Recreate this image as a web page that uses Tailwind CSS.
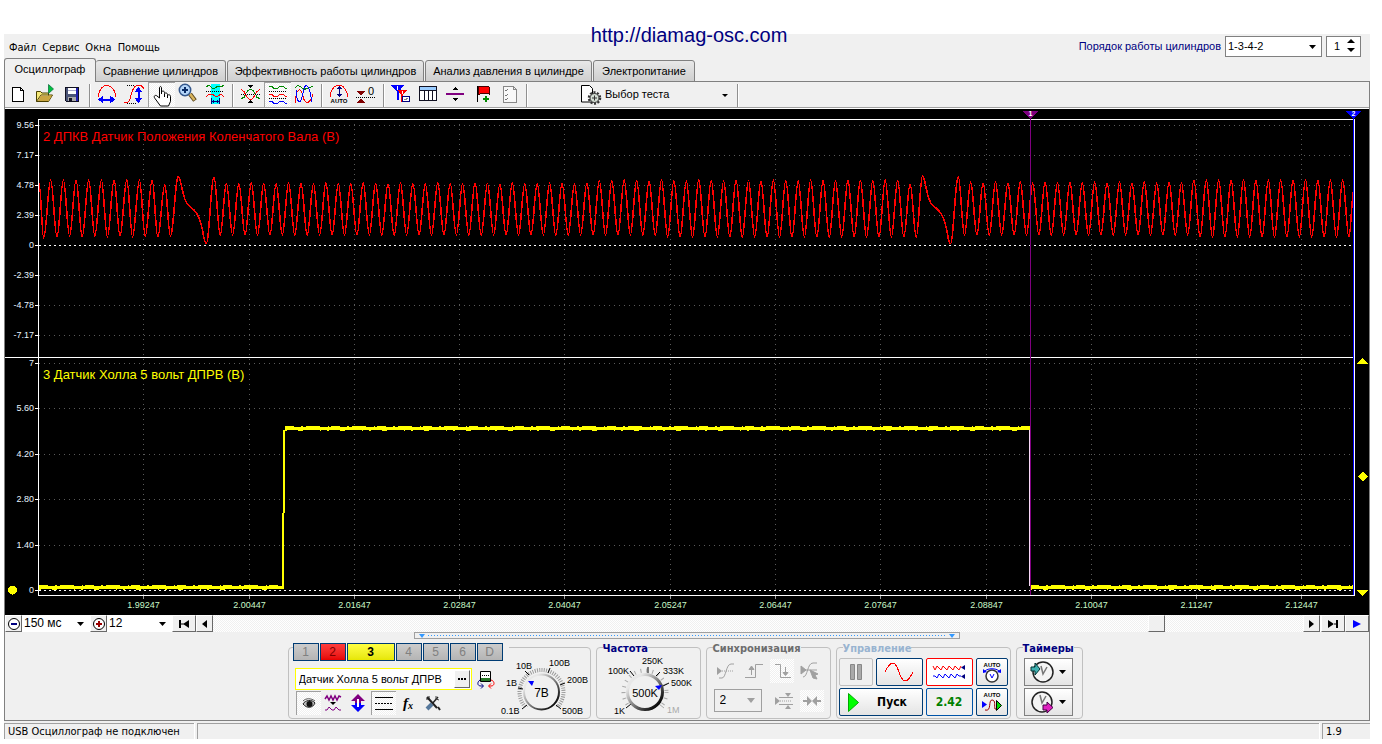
<!DOCTYPE html>
<html lang="ru">
<head>
<meta charset="utf-8">
<title>Осциллограф</title>
<script src="https://cdn.jsdelivr.net/npm/@tailwindcss/browser@4"></script>
</head>
<body class="bg-white font-['Liberation_Sans',sans-serif] text-[11px] leading-[13px] text-black">
<a href="http://diamag-osc.com" class="absolute top-[23px] left-1/2 z-10 -translate-x-1/2 pr-[4px] text-[20px] leading-[24px] text-[#000080]">http://diamag-osc.com</a>
<div class="mt-[34px] mr-[12px] ml-[4px] bg-[#f0f0f0]">

<!-- menu and firing order -->
<header class="flex h-[24px] items-center justify-between">
  <nav class="flex gap-[6px] pl-[5px] pt-[2px] font-['DejaVu_Sans_Condensed','DejaVu_Sans',sans-serif] font-stretch-condensed">
    <button>Файл</button><button>Сервис</button><button>Окна</button><button>Помощь</button>
  </nav>
  <div class="flex items-center gap-[4px] pr-[9px]">
    <label for="order" class="text-[#000080]">Порядок работы цилиндров</label>
    <div class="relative">
      <select id="order" class="block h-[21px] w-[97px] appearance-none border border-[#808080] bg-white pl-[2px] text-[11px]"><option>1-3-4-2</option></select>
      <svg class="pointer-events-none absolute top-[9px] right-[6px]" width="7" height="4"><path d="M0 0h7L3.500 4z"/></svg>
    </div>
    <div class="relative">
      <input aria-label="Цилиндр" value="1" class="block h-[21px] w-[35px] border border-[#808080] bg-white pl-[7px] text-[11px]">
      <svg class="pointer-events-none absolute top-[3px] right-[6px]" width="8" height="14"><path d="M0 4h8L4 0zM0 9h8L4 13z"/></svg>
    </div>
  </div>
</header>

<!-- tabs -->
<div role="tablist" class="relative z-10 -mb-px flex h-[24px] items-end">
  <button role="tab" aria-selected="true" class="h-[24px] w-[92px] rounded-t-[3px] border border-b-0 border-[#808080] bg-[#f0f0f0] pb-[2px]">Осциллограф</button>
  <button role="tab" class="mr-px h-[22px] w-[130px] rounded-t-[3px] border border-l-0 border-[#808080] bg-linear-to-b from-[#e8e8e8] to-[#cfcfcf]">Сравнение цилиндров</button>
  <button role="tab" class="mr-px h-[22px] w-[197px] rounded-t-[3px] border border-[#808080] bg-linear-to-b from-[#e8e8e8] to-[#cfcfcf]">Эффективность работы цилиндров</button>
  <button role="tab" class="mr-px h-[22px] w-[167px] rounded-t-[3px] border border-[#808080] bg-linear-to-b from-[#e8e8e8] to-[#cfcfcf]">Анализ давления в цилиндре</button>
  <button role="tab" class="h-[22px] w-[102px] rounded-t-[3px] border border-[#808080] bg-linear-to-b from-[#e8e8e8] to-[#cfcfcf]">Электропитание</button>
</div>

<main class="border border-[#808080]">
<!-- toolbar -->
<div role="toolbar" class="flex h-[27px] items-start border-b border-white shadow-[inset_0_-1px_#a0a0a0] [&_button]:flex [&_button]:h-[25px] [&_button]:w-[27px] [&_button]:items-start [&_button]:justify-center">
  <button aria-label="Новый"><svg width="27" height="24" viewBox="5 82 27 24" shape-rendering="crispEdges"><path d="M12.500 87.500h8l3 3v11h-11zM20.500 87.500v3h3" fill="#fff" stroke="#000"/></svg></button>
  <button aria-label="Открыть"><svg width="27" height="24" viewBox="32 82 27 24"><path d="M36.500 101.500v-10h4l1.500 1.500h6.500v3M36.500 101.500h12l4-6.500h-11.500z" fill="#f5e878" stroke="#4a4000"/><path d="M41 95.500h11l-3.500 5.500h-11z" fill="#c9a642"/><path d="M48.500 84.500v9l5-4.500z" fill="#00c040" stroke="#063" stroke-width=".7"/></svg></button>
  <button aria-label="Сохранить"><svg width="27" height="24" viewBox="59 82 27 24" shape-rendering="crispEdges"><path d="M65.500 87.500h13v14h-12l-1-1z" fill="#4a5478" stroke="#101020"/><path d="M68 88h8v6h-8z" fill="#fff"/><path d="M68 90h8v1h-8z" fill="#aac"/><path d="M68 97h8v4h-8z" fill="#aaa"/><path d="M69 98h3v3h-3z" fill="#112"/><path d="M76 88h2v13h-2z" fill="#2020b0"/></svg></button>
  <span class="mx-[3px] mt-[2px] h-[23px] w-[2px] border-l border-[#909090] bg-white"></span>
  <button aria-label="Период"><svg width="27" height="24" viewBox="94 82 27 24" shape-rendering="crispEdges"><path d="M98.500 97v-3c2-6 5-8.500 8-8.500s7 2.500 9 8.500v3" fill="none" stroke="red"/><path d="M98 99.500l5-4v3h7v-3l5 4-5 4v-3h-7v3z" fill="#00f"/></svg></button>
  <button aria-label="Амплитуда"><svg width="27" height="24" viewBox="121 82 27 24" shape-rendering="crispEdges"><path d="M124 102.500h3c5 0 3-16 10-17h4l3 3" fill="none" stroke="red"/><path d="M127 85.500h8M127 103.500h9" stroke="#000" stroke-dasharray="1 1"/><path d="M138.500 87l4 5h-3v6h3l-4 5-4-5h3v-6h-3z" fill="#00f"/></svg></button>
  <button aria-label="Рука" aria-pressed="true" class="border-t border-l border-[#a0a0a0] bg-[conic-gradient(#fff_25%,#f0f0f0_0_50%,#fff_0_75%,#f0f0f0_0)] bg-[length:2px_2px]"><svg width="26" height="24" viewBox="150 83 26 24"><path d="M160.500 98v-10c0-2 2-2 2 0v6-2c1-1.500 3-1 3 .5v1c1-1 3-.5 3 1v.8c1-1 3-.5 3 1v5l-2 4.700h-8l-5.500-7.500c-2-2.500.5-4 2-2.500z" fill="#fff" stroke="#000"/><path d="M165.500 94v3M168.500 95v3" stroke="#000"/></svg></button>
  <button aria-label="Масштаб"><svg width="27" height="24" viewBox="175 82 27 24"><path d="M190 94l5 6.500" stroke="#5b471f" stroke-width="4.500"/><path d="M190 94l4.500 6" stroke="#d9b45c" stroke-width="2.500"/><circle cx="185" cy="90" r="5.700" fill="#b4d5f8" stroke="#34578c" stroke-width="1.500"/><path d="M182 90h6M185 87v6" stroke="#0a2c66" stroke-width="2"/></svg></button>
  <button aria-label="Фрагмент"><svg width="27" height="24" viewBox="202 82 27 24" shape-rendering="crispEdges"><path d="M211 84h9v20h-9z" fill="#0ff"/><path d="M206 87l3-2 3 3h3l3-2 3 1 3-2" fill="none" stroke="#080"/><path d="M206 91.500h18" stroke="#000" stroke-dasharray="1 1"/><path d="M206 97l3-3h3l3 2h3l3-2 3 3" fill="none" stroke="red"/><path d="M211.500 98v6M219.500 98v6M212 101.500h7M213 100v3M217 100v3" stroke="#000080"/></svg></button>
  <span class="mx-[3px] mt-[2px] h-[23px] w-[2px] border-l border-[#909090] bg-white"></span>
  <button aria-label="Совместить"><svg width="27" height="24" viewBox="237 82 27 24" shape-rendering="crispEdges"><path d="M241 98.500l3-1c3-8 5-8 6.500-8s3 0 6.500 8l3 1" fill="none" stroke="#080"/><path d="M241 89.500l3 2c3 7 5 8 6.500 8s3-1 6.500-8l3-2" fill="none" stroke="red"/><path d="M241 94.500h19" stroke="#000" stroke-dasharray="1 1"/><path d="M248 85h5l-2.500 3zM248 103h5l-2.500-3z"/></svg></button>
  <button aria-label="Разделить" aria-pressed="true" class="border-t border-l border-[#a0a0a0] bg-[conic-gradient(#fff_25%,#f0f0f0_0_50%,#fff_0_75%,#f0f0f0_0)] bg-[length:2px_2px]"><svg width="26" height="24" viewBox="265 83 26 24" shape-rendering="crispEdges"><path d="M269 86.500h3l2 2h3l3-2h3l3 2h1" fill="none" stroke="#080"/><path d="M269 94.500h3l2 2h3l3-2h3l3 2h1" fill="none" stroke="red"/><path d="M269 101.500h3l2 2h3l3-2h3l3 2h1" fill="none" stroke="#00f"/><path d="M269 91.500h18M269 98.500h18" stroke="#000" stroke-dasharray="1 1"/></svg></button>
  <button aria-label="Наложить"><svg width="27" height="24" viewBox="291 82 27 24" shape-rendering="crispEdges"><path d="M295 88c2-3 4-3 7 0s6 0 11-2" fill="none" stroke="#080"/><path d="M295 103c1-15 6-17 8-7s7 8 10-2" fill="none" stroke="red"/><path d="M296 90c1 15 5 15 7 3s6-10 9 9" fill="none" stroke="#00f"/></svg></button>
  <span class="mx-[3px] mt-[2px] h-[23px] w-[2px] border-l border-[#909090] bg-white"></span>
  <button aria-label="Авто"><svg width="27" height="24" viewBox="326 82 27 24" shape-rendering="crispEdges"><path d="M330.500 97v-4c2-5 5-8 8.500-8s6 3 8 8v4" fill="none" stroke="red"/><path d="M339 86l3 3h-2.500v5h2.500l-3 3-3-3h2.500v-5h-2.500z" fill="#000080"/><text x="339" y="103" font-size="6" font-weight="bold" text-anchor="middle">AUTO</text></svg></button>
  <button aria-label="Ноль"><svg width="27" height="24" viewBox="353 82 27 24" shape-rendering="crispEdges"><path d="M357 91h8l-4 5zM357 103h8l-4-5z" fill="#800000"/><path d="M356 97.500h20" stroke="#000" stroke-dasharray="1 1"/><text x="368" y="95" font-size="11">0</text></svg></button>
  <span class="mx-[3px] mt-[2px] h-[23px] w-[2px] border-l border-[#909090] bg-white"></span>
  <button aria-label="Маркеры"><svg width="27" height="24" viewBox="389 82 27 24" shape-rendering="crispEdges"><path d="M392 85h13l-5 7v8h-2v-8z" fill="#00f"/><path d="M399 90h9l-4 5v7h-2v-7z" fill="red"/><path d="M398.500 86v4M403.500 91v3" stroke="#fff"/><path d="M403.500 96.500h7v5h-7z" fill="#fff" stroke="#000080"/><path d="M405 99.500h2v-1h2" stroke="#888" fill="none"/></svg></button>
  <button aria-label="Таблица"><svg width="27" height="24" viewBox="415 82 27 24" shape-rendering="crispEdges"><path d="M419.500 86.500h17v14h-17z" fill="#fff" stroke="#112"/><path d="M420 87h16v3h-16z" fill="#9cf"/><path d="M420 90.500h16M424.500 90v11M428.500 90v11M432.500 90v11" stroke="#112"/></svg></button>
  <button aria-label="Разделитель"><svg width="27" height="24" viewBox="441 82 27 24" shape-rendering="crispEdges"><path d="M445 93h18v2h-18z" fill="#800080"/><path d="M451 90h6l-3-3zM451 98h6l-3 3z"/></svg></button>
  <button aria-label="Флаг"><svg width="27" height="24" viewBox="468 82 27 24" shape-rendering="crispEdges"><path d="M476.500 86v16" stroke="#000"/><path d="M477 87c3-2 4 0 6 0s3-1 5 0v7c-2-1-3 0-5 0s-4-1-6 1z" fill="red" stroke="#400"/><path d="M482 99h6M485 96v6" stroke="#080" stroke-width="2"/></svg></button>
  <button aria-label="Отчёт"><svg width="27" height="24" viewBox="495 82 27 24" shape-rendering="crispEdges"><path d="M502.500 86.500h10l3 3v13h-13zM512.500 86.500v3h3" fill="#f8f8f8" stroke="#888"/><path d="M504 90l1 1 2-2M504 95l1 1 2-2M504 99l1 1 2-2" fill="none" stroke="#777"/></svg></button>
  <span class="mx-[3px] mt-[2px] h-[23px] w-[2px] border-l border-[#909090] bg-white"></span>
  <div class="ml-[46px] flex items-center">
    <svg width="26" height="24" viewBox="577 82 26 24"><path d="M581.500 84.500h8l3 3v13.500h-11z" fill="#fff" stroke="#000"/><circle cx="594.500" cy="97" r="5.500" fill="none" stroke="#333" stroke-width="2.500" stroke-dasharray="2 1.460"/><circle cx="594.500" cy="97" r="4.500" fill="#d5dfd5" stroke="#333"/><path d="M592 97h5M594.500 94.500v5" stroke="#333"/></svg>
    <div class="relative">
      <select aria-label="Выбор теста" class="block w-[131px] appearance-none bg-transparent pl-[2px] text-[11px]"><option>Выбор теста</option></select>
      <svg class="pointer-events-none absolute top-[6px] right-[6px]" width="6" height="3"><path d="M0 0h6L3 3z"/></svg>
    </div>
    <span class="mx-[3px] mt-[2px] h-[23px] w-[2px] border-l border-[#909090] bg-white"></span>
  </div>
</div>

<!-- signal plots -->
<section id="chart" class="relative h-[506px] overflow-hidden bg-black text-[9px] leading-[10px] text-[#e8f4ff]">
  <svg class="block h-full w-full" viewBox="5 109 1364 506" preserveAspectRatio="none" fill="none" shape-rendering="crispEdges">
    <g id="grid"></g>
    <path id="wave" stroke="#f00" stroke-width="1.600"/>
    <path d="M38.500 595.500V119.500H1354.500V595.500zM5 357.500H1354" stroke="#fff"/>
    <g id="hall"></g>
    <path d="M1353.500 119v476" stroke="#00f"/>
    <path d="M1030.500 119v476" stroke="#800080"/>
    <path d="M1029.500 430v156" stroke="#f8d8f8"/>
    <path d="M1023 111h15l-7.500 8z" fill="#800080"/><path d="M1346 111h15l-7.500 8z" fill="#00f"/>
    <path d="M1357 364h11l-5.500-6zM1357 590h11l-5.500 6zM1362.500 471.500l5 5-5 5-5-5z" fill="#ff0"/>
    <circle cx="12.500" cy="590" r="4.500" fill="#ff0"/>
  </svg>
  <div class="absolute top-[20px] left-[38px] text-[13px] leading-[16px] text-[#f00]">2 ДПКВ Датчик Положения Коленчатого Вала (В)</div>
  <div class="absolute top-[258px] left-[38px] text-[13px] leading-[16px] text-[#ff0]">3 Датчик Холла 5 вольт ДПРВ (В)</div>
</section>

<!-- time navigation -->
<div class="flex h-[17px] bg-white [&_button]:flex [&_button]:items-center [&_button]:justify-center [&_button]:border [&_button]:border-t-white [&_button]:border-l-white [&_button]:border-r-[#696969] [&_button]:border-b-[#696969] [&_button]:bg-[#f0f0f0]">
  <button aria-label="Меньше" class="w-[17px]"><svg width="14" height="14"><circle cx="7" cy="7" r="5.500" fill="#fff" stroke="#000"/><path d="M4 7h6" stroke="#000080" stroke-width="2"/></svg></button>
  <div class="relative"><select aria-label="Развёртка" class="block h-[17px] w-[68px] appearance-none bg-white pl-[2px] text-[12px]"><option>150 мс</option></select><svg class="pointer-events-none absolute top-[7px] right-[6px]" width="7" height="4"><path d="M0 0h7L3.500 4z"/></svg></div>
  <button aria-label="Больше" class="w-[17px]"><svg width="14" height="14"><circle cx="7" cy="7" r="5.500" fill="#fff" stroke="#000"/><path d="M4 7h6M7 4v6" stroke="#900" stroke-width="2"/></svg></button>
  <div class="relative"><select aria-label="Деления" class="block h-[17px] w-[65px] appearance-none bg-white pl-[2px] text-[12px]"><option>12</option></select><svg class="pointer-events-none absolute top-[7px] right-[6px]" width="7" height="4"><path d="M0 0h7L3.500 4z"/></svg></div>
  <button aria-label="В начало" class="w-[24px]"><svg width="12" height="8"><path d="M1 0h2v8H1zM11 0v8L5 4zM3 3.500h3v1H3z"/></svg></button>
  <button aria-label="Назад" class="w-[17px]"><svg width="5" height="8"><path d="M5 0v8L0 4z"/></svg></button>
  <div class="flex min-w-0 flex-1 bg-[conic-gradient(#fff_25%,#f0f0f0_0_50%,#fff_0_75%,#f0f0f0_0)] bg-[length:2px_2px]"><span class="flex-[935]"></span><button aria-label="Положение" class="w-[17px]"></button><span class="flex-[138]"></span></div>
  <button aria-label="Вперёд" class="w-[17px]"><svg width="5" height="8"><path d="M0 0v8l5-4z"/></svg></button>
  <button aria-label="В конец" class="ml-px w-[24px]"><svg width="12" height="8"><path d="M9 0h2v8H9zM1 0v8l6-4zM6 3.500h3v1H6z"/></svg></button>
  <button aria-label="Воспроизвести" class="w-[24px]"><svg width="8" height="8"><path d="M0 0v8l8-4z" fill="#00f"/></svg></button>
</div>

<!-- splitter -->
<div class="mx-auto flex h-[7px] w-[546px] items-center border border-[#a0a0a0] px-[4px]">
  <svg width="6" height="4"><path d="M0 0h6L3 4z" fill="#39f"/></svg>
  <span class="mx-[3px] h-px flex-1 bg-[repeating-linear-gradient(90deg,#39f_0_1px,transparent_1px_3px)]"></span>
  <svg width="6" height="4"><path d="M0 0h6L3 4z" fill="#39f"/></svg>
</div>

<!-- control panel -->
<div class="flex h-[81px] justify-center gap-[5px] pt-[8px] pr-[4px]">
  <fieldset class="flex h-[72px] w-[303px] rounded-[4px] border border-[#c0c0c0]">
    <div class="-mt-[5px] ml-[4px] w-[214px]">
      <div class="flex w-max gap-px bg-[#f0f0f0] pr-[6px] text-[12px] text-[#808080] [&>button]:h-[18px] [&>button]:min-w-[26px] [&>button]:border [&>button]:border-[#003c74]">
        <button class="bg-linear-to-b from-[#ccc] to-[#b4b4b4]">1</button>
        <button class="bg-linear-to-b from-[#ff3c3c] to-[#e60000] text-[#800000]">2</button>
        <button class="w-[48px] bg-linear-to-b from-[#ffff40] to-[#e6e600] font-bold text-black">3</button>
        <button class="bg-linear-to-b from-[#ccc] to-[#b4b4b4]">4</button>
        <button class="bg-linear-to-b from-[#ccc] to-[#b4b4b4]">5</button>
        <button class="bg-linear-to-b from-[#ccc] to-[#b4b4b4]">6</button>
        <button class="bg-linear-to-b from-[#ccc] to-[#b4b4b4]">D</button>
      </div>
      <div class="mt-[7px] ml-[2px] flex items-center gap-[5px]">
        <div class="flex h-[22px] w-[177px] border border-[#ff0] bg-white p-[1px]">
          <input aria-label="Датчик" value="Датчик Холла 5 вольт ДПРВ" class="w-[157px] pl-[2px] text-[11px]">
          <button aria-label="Выбрать датчик" class="flex flex-1 items-center justify-center border border-t-white border-l-white border-r-[#696969] border-b-[#696969] bg-[#f0f0f0]"><svg width="8" height="2"><path d="M0 0h2v2H0zM3 0h2v2H3zM6 0h2v2H6z"/></svg></button>
        </div>
        <svg width="18" height="19" viewBox="476 669 18 19"><path d="M479.500 670.500h10v10h-10z" fill="#fff" stroke="#000"/><path d="M480 677h9v3h-9z" fill="#287828"/><path d="M481 674.500h7" stroke="#000" stroke-dasharray="1 1"/><path d="M479 679c-3 2-3 6 1 6h2M480 682.500l2.500 2.500-2.500 2.500" stroke="#000080" fill="none"/><path d="M490 679c4 1 4 6 0 6h-2M490 682.500l-2.500 2.500 2.500 2.500" stroke="red" fill="none"/></svg>
      </div>
      <div class="mt-px ml-[3px] flex h-[24px] [&_button]:flex [&_button]:h-[24px] [&_button]:w-[25px] [&_button]:items-center [&_button]:justify-center">
        <button aria-label="Показать" aria-pressed="true" class="border-t border-l border-[#a0a0a0] bg-[conic-gradient(#fff_25%,#f0f0f0_0_50%,#fff_0_75%,#f0f0f0_0)] bg-[length:2px_2px]"><svg width="14" height="11"><path d="M1 6c2-4 9-5 12-1-2 5-8 6-12 1" fill="#bbb" stroke="#222"/><circle cx="7.500" cy="6" r="3" fill="#111"/><path d="M1 3c3-3 8-3 12 0" stroke="#555" fill="none"/></svg></button>
        <button aria-label="Фильтр"><svg width="18" height="18" fill="none" stroke="#800080"><path d="M1 5l2-3 2 4 2-4 2 4 2-4 2 4 2-4 2 1" stroke-width="1.500"/><path d="M1 16h2l2-3 3 3h2l2-3 3 3h2"/><path d="M6 8h6l-3 3z" fill="#000" stroke="none"/></svg></button>
        <button aria-label="Инверсия"><svg width="16" height="18"><path d="M8 0l7 7h-4v3H5V7H1z" fill="#800080"/><path d="M8 18l7-7h-4V9H5v2H1z" fill="#00f"/><path d="M8 5v8" stroke="#fff" stroke-width="2"/></svg></button>
        <button aria-label="Линии" aria-pressed="true" class="border-t border-l border-[#a0a0a0] bg-[conic-gradient(#fff_25%,#f0f0f0_0_50%,#fff_0_75%,#f0f0f0_0)] bg-[length:2px_2px]"><svg width="18" height="15" stroke="#000"><path d="M0 1.500h18M0 13.500h18"/><path d="M0 7.500h18" stroke-dasharray="2 1"/></svg></button>
        <button aria-label="Функция" class="font-['Liberation_Serif',serif] text-[15px] font-bold italic">f<span class="pt-[4px] text-[10px]">x</span></button>
        <button aria-label="Настройки"><svg width="16" height="16"><path d="M2 2l10 11M13 12l2 3" stroke="#222" stroke-width="2"/><path d="M13 2L7 9" stroke="#222" stroke-width="1.500"/><path d="M7 9l-5 5" stroke="#56789c" stroke-width="4"/><path d="M1 4l3 0 0-3" stroke="#222" fill="none"/><path d="M11 1v3l3 1" stroke="#444" fill="none"/></svg></button>
      </div>
    </div>
    <svg class="-ml-[7px] overflow-visible" width="90" height="70" viewBox="500 648 90 70" font-size="9">
      <defs><linearGradient id="kn" x1="0" y1="0" x2="1" y2="1"><stop offset=".2" stop-color="#e8e8e8"/><stop offset=".9" stop-color="#000"/></linearGradient></defs>
      <mask id="cut"><path d="M515 665h53v42h-53z" fill="#fff"/></mask>
      <circle cx="541.500" cy="692" r="22" fill="none" stroke="#999" stroke-width="4" stroke-dasharray="1 1.300" pathLength="138" mask="url(#cut)"/>
      <path d="M529 675l-4-4M548 673l2-5M560 685l5-2M523 689l-5-1M527 705l-5 4M556 705l5 4" stroke="#000"/>
      <circle cx="541.500" cy="692" r="17.500" fill="#f0f0f0" stroke="url(#kn)" stroke-width="2"/>
      <path d="M528 681h6l-2 5z" fill="#00f"/>
      <text x="541.500" y="697" text-anchor="middle" font-size="12">7В</text>
      <text x="516" y="669">10В</text><text x="549" y="666">100В</text><text x="567" y="683">200В</text><text x="562" y="714">500В</text><text x="506" y="686">1В</text><text x="501" y="714">0.1В</text>
    </svg>
  </fieldset>

  <fieldset class="relative h-[72px] w-[105px] rounded-[4px] border border-[#c0c0c0]">
    <legend class="absolute -top-[6px] left-[6px] bg-[#f0f0f0] font-['DejaVu_Sans_Condensed','DejaVu_Sans',sans-serif] font-bold font-stretch-condensed text-[#000080]">Частота</legend>
    <svg class="block" width="103" height="70" viewBox="597 648 103 70" font-size="9">
      <mask id="cut2"><path d="M615 665h60v42h-60z" fill="#fff"/></mask>
      <circle cx="645" cy="692" r="21.500" fill="none" stroke="#aaa" stroke-width="4" stroke-dasharray="1 5" mask="url(#cut2)"/>
      <path d="M634 676l-4-5M648 673v-6M656 676l4-4M663 686l6-3M631 704l-5 4" stroke="#000"/><path d="M659 704l5 4" stroke="#aaa"/>
      <circle cx="645" cy="692" r="17.500" fill="#f0f0f0" stroke="url(#kn)" stroke-width="3"/>
      <text x="645" y="697" text-anchor="middle" font-size="11">500K</text>
      <path d="M655 686l7-1-3 5z" fill="#00f"/>
      <text x="642" y="664">250K</text><text x="608" y="674">100K</text><text x="663" y="674">333K</text><text x="671" y="686">500K</text><text x="614" y="714">1K</text><text x="667" y="713" fill="#aaa">1M</text>
    </svg>
  </fieldset>

  <fieldset disabled class="relative h-[72px] w-[125px] rounded-[4px] border border-[#c0c0c0]">
    <legend class="absolute -top-[6px] left-[6px] bg-[#f0f0f0] font-['DejaVu_Sans_Condensed','DejaVu_Sans',sans-serif] font-bold font-stretch-condensed text-[#6d6d6d]">Синхронизация</legend>
    <div class="mt-[11px] ml-[7px] flex gap-[4px] text-[#a0a0a0] [&_button]:flex [&_button]:h-[24px] [&_button]:w-[24px] [&_button]:items-center [&_button]:justify-center">
      <button aria-label="Уровень"><svg width="18" height="18" fill="none" stroke="currentColor"><path d="M2 16h3c4 0 4-14 9-14h3"/><path d="M5 9h12" stroke-dasharray="1 1"/><path d="M0 5v8l5-4z" fill="currentColor" stroke="none"/></svg></button>
      <button aria-label="Фронт"><svg width="18" height="16" fill="none" stroke="currentColor"><path d="M0 14.500h10.500v-13H18M6.500 4v8"/><path d="M4 6.500h5L6.500 3z" fill="currentColor"/></svg></button>
      <button aria-label="Спад" class="bg-[conic-gradient(#fff_25%,#f0f0f0_0_50%,#fff_0_75%,#f0f0f0_0)] bg-[length:2px_2px]"><svg width="18" height="16" fill="none" stroke="currentColor"><path d="M2 1.500h5.500v13H18M12.500 4v8"/><path d="M10 9.500h5l-2.500 3z" fill="currentColor"/></svg></button>
      <button aria-label="Ручной"><svg width="20" height="20" fill="none" stroke="currentColor"><path d="M3 16c5 0 4-14 10-14h4M5 9h12"/><path d="M1 5v8l5-4zM10 9l8 4-3 1 2 4-4-1z" fill="currentColor"/></svg></button>
    </div>
    <div class="mt-[6px] ml-[7px] flex items-center text-[#a0a0a0]">
      <div class="relative"><select aria-label="Канал" class="block h-[23px] w-[48px] appearance-none border border-[#a0a0a0] pl-[5px] text-[12px] text-black opacity-100"><option>2</option></select><svg class="pointer-events-none absolute top-[9px] right-[7px]" width="8" height="5"><path d="M0 0h8L4 5z" fill="#a0a0a0"/></svg></div>
      <button aria-label="Границы" class="ml-[10px] flex h-[22px] w-[24px] items-center justify-center"><svg width="18" height="16" fill="none" stroke="currentColor"><path d="M4 4.500h14M4 11.500h14"/><path d="M5 8h12" stroke-dasharray="1 1"/><path d="M0 4v8l5-4zM10 0h6l-3 4zM10 16h6l-3-4z" fill="currentColor" stroke="none"/></svg></button>
      <button aria-label="Центр" class="ml-[4px] flex h-[22px] w-[24px] items-center justify-center bg-[conic-gradient(#fff_25%,#f0f0f0_0_50%,#fff_0_75%,#f0f0f0_0)] bg-[length:2px_2px]"><svg width="18" height="10" fill="currentColor"><path d="M0 4h4V0l5 5-5 5V6H0zM18 4h-4V0L9 5l5 5V6h4z"/></svg></button>
    </div>
  </fieldset>

  <fieldset class="relative h-[72px] w-[175px] rounded-[4px] border border-[#c0c0c0]">
    <legend class="absolute -top-[6px] left-[6px] bg-[#f0f0f0] font-['DejaVu_Sans_Condensed','DejaVu_Sans',sans-serif] font-bold font-stretch-condensed text-[#99b4d1]">Управление</legend>
    <div class="mt-[10px] ml-[2px] grid grid-cols-[34px_47px_47px_32px] gap-x-[3px] gap-y-[2px] [&_button]:flex [&_button]:h-[28px] [&_button]:items-center [&_button]:justify-center [&_button]:rounded-[2px] [&_button]:border">
      <button aria-label="Пауза" disabled class="border-[#c0c0c0]"><svg width="12" height="16"><path d="M.5.5h4v15h-4zM7.500.5h4v15h-4z" fill="#aaa" stroke="#888"/></svg></button>
      <button aria-label="Сигнал" class="border-[#003c74] bg-linear-to-b from-white to-[#e4e4e4]"><svg width="30" height="20"><path d="M1 10C7-2 11-2 15 10s8 12 14 0" fill="none" stroke="red" shape-rendering="crispEdges"/></svg></button>
      <button aria-label="Запись" class="border-[#f00] bg-white"><svg width="34" height="18" fill="none"><path d="M1 3l2 4 2-4 2 2 2 2 2-4 2 2 2 2 2-4 2 2 2 2 2-4 2 2 2 2 2-4" stroke="red"/><path d="M1 13h2l2 2 2-4 2 2 2 2 2-4 2 2 2 2 2-4 2 2 2 2 2-4 2 2h2" stroke="#00f"/><path d="M33 2v5l-4-2.500zM33 11v5l-4-2.500z" fill="#000080"/></svg></button>
      <button aria-label="Авто В" class="border-[#003c74] bg-linear-to-b from-white to-[#e4e4e4]"><svg width="26" height="24"><text x="13" y="7" text-anchor="middle" font-size="6" font-weight="bold">AUTO</text><circle cx="13" cy="16" r="6" fill="#fff" stroke="#333" stroke-width="1.500"/><path d="M6 11c3-3 11-3 14 0M11 14l2 4 2-4" fill="none" stroke="#00f"/><path d="M4 9v4l4-1zM22 9v4l-4-1z" fill="#00f"/></svg></button>
      <button class="col-span-2 gap-[18px] border-[#003c74] bg-linear-to-b from-white to-[#e4e4e4] font-['DejaVu_Sans_Condensed','DejaVu_Sans',sans-serif] text-[12px] font-bold font-stretch-condensed"><svg width="11" height="19"><path d="M.5.5v18l10-9z" fill="#0f0" stroke="#0a0"/></svg><span class="pr-[6px]">Пуск</span></button>
      <button class="border-[#0054a8] bg-[#f0f0f0] font-['DejaVu_Sans_Condensed','DejaVu_Sans',sans-serif] text-[12px] font-bold font-stretch-condensed text-[#008000]">2.42</button>
      <button aria-label="Авто пуск" class="border-[#003c74] bg-linear-to-b from-white to-[#e4e4e4]"><svg width="26" height="24"><text x="13" y="7" text-anchor="middle" font-size="6" font-weight="bold">AUTO</text><path d="M6 20c7 2 3-10 7-10s2 6 3 9h2" fill="none" stroke="#900"/><path d="M3 11v7l5-3.500z" fill="#00f"/><path d="M17.500 10.500v10l5-5z" fill="#0d0" stroke="#000"/></svg></button>
    </div>
  </fieldset>

  <fieldset class="relative h-[72px] w-[67px] rounded-[4px] border border-[#c0c0c0]">
    <legend class="absolute -top-[6px] left-[6px] bg-[#f0f0f0] font-['DejaVu_Sans_Condensed','DejaVu_Sans',sans-serif] font-bold font-stretch-condensed text-[#000080]">Таймеры</legend>
    <div class="mt-[10px] ml-[7px] flex w-[49px] flex-col gap-[2px] [&_button]:flex [&_button]:h-[28px] [&_button]:items-center [&_button]:gap-[5px] [&_button]:border [&_button]:border-[#808080] [&_button]:bg-linear-to-b [&_button]:from-white [&_button]:to-[#e4e4e4] [&_button]:pl-[5px]">
      <button aria-label="Таймер запуска"><svg width="24" height="24"><circle cx="13" cy="12" r="10" fill="#f4f4f4" stroke="#222" stroke-width="1.500"/><path d="M11 6l2 8 4-7" fill="none" stroke="#777" stroke-width="1.500"/><path d="M1 7h4V3l5 6-5 6v-4H1z" fill="#40b0b0" stroke="#033"/></svg><svg width="7" height="4"><path d="M0 0h7L3.500 4z"/></svg></button>
      <button aria-label="Таймер остановки"><svg width="24" height="24"><circle cx="12" cy="12" r="10" fill="#f4f4f4" stroke="#222" stroke-width="1.500"/><path d="M10 5l2 8 4-7" fill="none" stroke="#777" stroke-width="1.500"/><path d="M13 15h4v-3l6 5.500-6 5.500v-3h-4z" fill="#e020c0" stroke="#404"/></svg><svg width="7" height="4"><path d="M0 0h7L3.500 4z"/></svg></button>
    </div>
  </fieldset>
</div>
</main>

<!-- status bar -->
<footer class="flex h-[18px] gap-[3px] pt-[2px] font-['DejaVu_Sans_Condensed','DejaVu_Sans',sans-serif] font-stretch-condensed [&>div]:border-t [&>div]:border-l [&>div]:border-[#a0a0a0] [&>div]:pt-px [&>div]:pl-[3px]">
  <div class="w-[190px] shadow-[1px_0_#fff]">USB Осциллограф не подключен</div>
  <div class="flex-1 shadow-[1px_0_#fff]"></div>
  <div class="w-[48px]">1.9</div>
</footer>
</div>

<script>
const X0 = 5, Y0 = 109, W = 1364;
const chart = document.getElementById('chart');
const cols = [143.5, 249.5, 354.5, 459.5, 564.5, 670.5, 775.5, 880.5, 986.5, 1091.5, 1196.5, 1301.5];
const rows = [[125,'9.56'],[155,'7.17'],[185,'4.78'],[215,'2.39'],[245,'0'],[275,'-2.39'],[305,'-4.78'],[335,'-7.17'],[363,'7'],[408,'5.60'],[454,'4.20'],[499,'2.80'],[545,'1.40'],[590,'0']];
let g = '';
rows.forEach(([y, t]) => {
  const zero = t === '0';
  g += `<path d="M39 ${y + .5}H1354" stroke="${zero ? '#fff' : '#5a5a5a'}" stroke-dasharray="${zero ? '2 3' : '1 4'}"/><path d="M35 ${y + .5}h4" stroke="#fff"/>`;
  const s = document.createElement('span');
  s.className = 'absolute left-0 w-[29px] text-right';
  s.style.top = (y - Y0 - 5) + 'px';
  s.textContent = t;
  chart.append(s);
});
cols.forEach((x, i) => {
  g += `<path d="M${x} 124V595" stroke="#5a5a5a" stroke-dasharray="1 4"/><path d="M${x} 595v4" stroke="#999"/>`;
  const s = document.createElement('span');
  s.className = 'absolute top-[491px] -translate-x-1/2 text-[#c8f8c8]';
  s.style.left = ((x - X0) / W * 100) + '%';
  s.textContent = (1.99247 + i * .012).toFixed(5);
  chart.append(s);
});
[[1030.5, '1'], [1353.5, '2']].forEach(([x, t]) => {
  const s = document.createElement('span');
  s.className = 'absolute top-[1px] -translate-x-1/2 text-[7px] leading-[8px] font-bold text-white';
  s.style.left = ((x - X0) / W * 100) + '%';
  s.textContent = t;
  chart.append(s);
});
document.getElementById('grid').innerHTML = g;

// crankshaft signal: list of extremes joined by smooth half waves
let d = 'M39 183', px = 39, py = 183;
const to = (x, y) => { const k = (x - px) * .364; d += `C${px + k} ${py} ${x - k} ${y} ${x} ${y}`; px = x; py = y; };
const gap = x => { d += `C${x + 3} 177 ${x + 4} 201 ${x + 10} 205C${x + 17} 211 ${x + 20} 212 ${x + 24} 229C${x + 26} 239 ${x + 26} 243 ${x + 28} 243.5`; px = x + 28; py = 243.5; };
to(43.7, 238);
for (let i = 0; i < 10; i++) { to(50.7 + 12.68 * i, i === 9 ? 185 : 180); to(57 + 12.6 * i, i % 2 ? 236 : 237); }
to(178.3, 176.5); gap(178.3);
for (let i = 0; i < 57; i++) { to(214 + 12.43 * i, i === 0 ? 177 : i === 56 ? 184 : 183 - (i > 30 ? 3 : 0) + i % 3 * .5); to(220.2 + 12.43 * i, i > 35 ? 237 : 235); }
to(922.5, 175.5); gap(922.5);
for (let i = 0; i < 32; i++) { to(958.3 + 12.4 * i, i === 0 ? 177 : i > 18 ? 180 : 183 - i % 2); to(964.5 + 12.4 * i, i > 18 ? 237 : 235); }
to(1354, 188);
document.getElementById('wave').setAttribute('d', d);

// hall sensor: thick line with a one-pixel ripple
let h = '';
const ripple = (a, b, y) => {
  h += `<path d="M${a} ${y + .5}H${b}" stroke="#ff0" stroke-width="3"/>`;
  h += `<path d="M${a} ${y - 1.5}H${b}" stroke="#ff0" stroke-dasharray="9 7 2 3 14 8 1 2"/><path d="M${a} ${y + 2.5}H${b}" stroke="#ff0" stroke-dasharray="2 11 5 17 1 6"/>`;
};
ripple(39, 284, 587); ripple(285, 1030, 428); ripple(1030, 1353, 587);
h += '<path d="M283 588V513M284 513V430" stroke="#ff0" stroke-width="2"/>';
document.getElementById('hall').innerHTML = h;
</script>
</body>
</html>
